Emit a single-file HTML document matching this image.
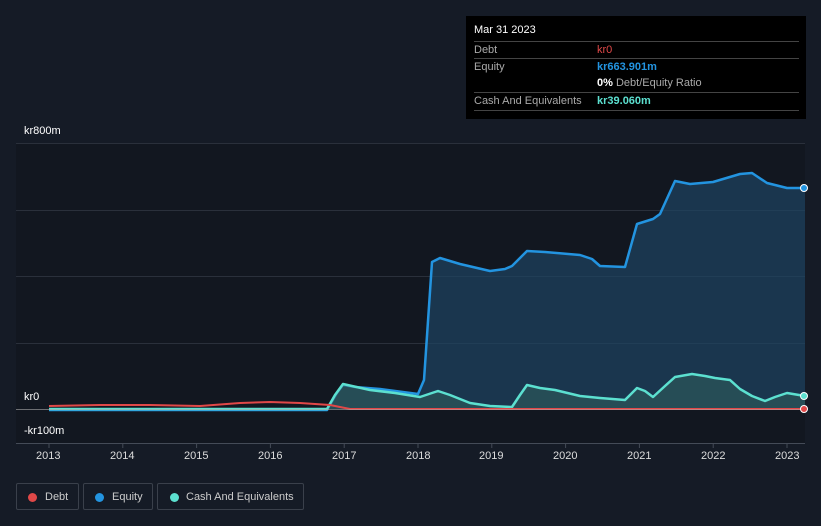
<!DOCTYPE html>
<html><head><meta charset="utf-8"><style>
body{margin:0;width:821px;height:526px;background:#151b26;font-family:"Liberation Sans",sans-serif;overflow:hidden;position:relative}
.t{position:absolute;color:#fff;font-size:11px}
.tip{position:absolute;left:466px;top:16px;width:340px;height:103px;background:#000;}
.tip .r{position:absolute;left:8px;width:325px;border-top:1px solid #444;font-size:11px;color:#aaa;height:17px;line-height:17px}
.leg{position:absolute;top:483px;height:27px;border:1px solid #3a404b;border-radius:2px;color:#ccc;font-size:11px;line-height:27px;box-sizing:border-box}
.leg i{position:absolute;top:9px;width:9px;height:9px;border-radius:50%}
</style></head><body>
<svg width="821" height="526" style="position:absolute;left:0;top:0">
<rect x="16" y="143" width="789" height="300" fill="#121720"/>
<g stroke="#2a303b" stroke-width="1">
<line x1="16" y1="143.5" x2="805" y2="143.5"/><line x1="16" y1="210.5" x2="805" y2="210.5"/><line x1="16" y1="276.5" x2="805" y2="276.5"/><line x1="16" y1="343.5" x2="805" y2="343.5"/>
</g>
<line x1="16" y1="443.5" x2="805" y2="443.5" stroke="#444b57"/>
<g stroke="#444b57"><line x1="49" y1="443" x2="49" y2="448"/><line x1="122.8" y1="443" x2="122.8" y2="448"/><line x1="196.6" y1="443" x2="196.6" y2="448"/><line x1="270.4" y1="443" x2="270.4" y2="448"/><line x1="344.2" y1="443" x2="344.2" y2="448"/><line x1="418" y1="443" x2="418" y2="448"/><line x1="491.8" y1="443" x2="491.8" y2="448"/><line x1="565.6" y1="443" x2="565.6" y2="448"/><line x1="639.4" y1="443" x2="639.4" y2="448"/><line x1="713.2" y1="443" x2="713.2" y2="448"/><line x1="787" y1="443" x2="787" y2="448"/></g>
<path d="M49 410 L327 410 L337 393 L343 385 L355 387 L380 389 L418 394 L424 380 L432 262 L440 258 L460 264 L490 271 L505 269 L512 266 L527 251 L545 252 L580 255 L592 259 L600 266 L625 267 L637 224 L653 219 L660 214 L675 181 L690 184 L713 182 L740 174 L752 173 L767 183 L787 188 L805 188 L805 409 L49 409Z" fill="#1e4562" opacity="0.7"/>
<path d="M49 410 L327 410 L337 393 L343 385 L355 387 L380 389 L418 394 L424 380 L432 262 L440 258 L460 264 L490 271 L505 269 L512 266 L527 251 L545 252 L580 255 L592 259 L600 266 L625 267 L637 224 L653 219 L660 214 L675 181 L690 184 L713 182 L740 174 L752 173 L767 183 L787 188 L805 188" fill="none" stroke="#2394e0" stroke-width="2.5" stroke-linejoin="round"/>
<path d="M49 409 L327 409 L335 395 L343 384 L352 386 L370 390 L395 393 L420 397 L438 391 L450 395 L470 403 L490 406 L512 407 L520 395 L527 385 L540 388 L555 390 L580 396 L600 398 L625 400 L637 388 L645 391 L653 397 L665 386 L675 377 L692 374 L705 376 L715 378 L730 380 L740 389 L752 396 L765 401 L775 397 L787 393 L805 396 L805 409Z" fill="#2f5e5c" opacity="0.6"/>
<path d="M49 409 L327 409 L335 395 L343 384 L352 386 L370 390 L395 393 L420 397 L438 391 L450 395 L470 403 L490 406 L512 407 L520 395 L527 385 L540 388 L555 390 L580 396 L600 398 L625 400 L637 388 L645 391 L653 397 L665 386 L675 377 L692 374 L705 376 L715 378 L730 380 L740 389 L752 396 L765 401 L775 397 L787 393 L805 396" fill="none" stroke="#5ce0d0" stroke-width="2.5" stroke-linejoin="round"/>
<path d="M49 406 L100 405 L150 405 L200 406 L240 403 L270 402 L300 403 L330 405 L350 409 L805 409" fill="none" stroke="#e04848" stroke-width="2"/>
<line x1="16" y1="409.5" x2="805" y2="409.5" stroke="#aaa" stroke-width="1" opacity="0.6"/>
<circle cx="804" cy="188" r="3.5" fill="#2394e0" stroke="#fff" stroke-width="1"/>
<circle cx="804" cy="396" r="3.5" fill="#5ce0d0" stroke="#fff" stroke-width="1"/>
<circle cx="804" cy="409" r="3.5" fill="#e04848" stroke="#fff" stroke-width="1"/>
</svg>
<div class="t" style="left:24px;top:125px">kr800m</div>
<div class="t" style="left:24px;top:391px">kr0</div>
<div class="t" style="left:24px;top:425px">-kr100m</div>
<div class="t" style="left:36px;top:450px;color:#ddd">2013</div>
<div class="t" style="left:110px;top:450px;color:#ddd">2014</div>
<div class="t" style="left:184px;top:450px;color:#ddd">2015</div>
<div class="t" style="left:258px;top:450px;color:#ddd">2016</div>
<div class="t" style="left:332px;top:450px;color:#ddd">2017</div>
<div class="t" style="left:406px;top:450px;color:#ddd">2018</div>
<div class="t" style="left:479px;top:450px;color:#ddd">2019</div>
<div class="t" style="left:553px;top:450px;color:#ddd">2020</div>
<div class="t" style="left:627px;top:450px;color:#ddd">2021</div>
<div class="t" style="left:701px;top:450px;color:#ddd">2022</div>
<div class="t" style="left:775px;top:450px;color:#ddd">2023</div>
<div class="tip">
<div class="t" style="left:8px;top:8px;font-size:11px">Mar 31 2023</div>
<div class="r" style="top:25px">Debt<span style="position:absolute;left:123px;color:#e04848">kr0</span></div>
<div class="r" style="top:42px">Equity<span style="position:absolute;left:123px;color:#2394e0;font-weight:bold">kr663.901m</span></div>
<div class="r" style="top:59px;border-top:none"><span style="position:absolute;left:123px"><b style="color:#fff">0%</b> Debt/Equity Ratio</span></div>
<div class="r" style="top:76px">Cash And Equivalents<span style="position:absolute;left:123px;color:#5ce0d0;font-weight:bold">kr39.060m</span></div>
<div class="r" style="top:94px;height:0"></div>
</div>
<div class="leg" style="left:16px;width:63px"><i style="left:11px;background:#e04848"></i><span style="position:absolute;left:28px">Debt</span></div>
<div class="leg" style="left:83px;width:70px"><i style="left:11px;background:#2394e0"></i><span style="position:absolute;left:28px">Equity</span></div>
<div class="leg" style="left:157px;width:147px"><i style="left:12px;background:#5ce0d0"></i><span style="position:absolute;left:28px">Cash And Equivalents</span></div>
</body></html>
